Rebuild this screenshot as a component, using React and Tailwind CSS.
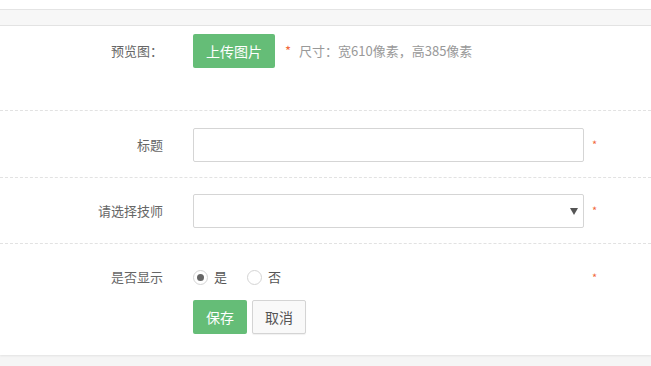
const font = { fontFamily: '"Noto Sans CJK SC", "Liberation Sans", sans-serif' };

function Req({ className = '' }) {
  return <span className={`text-[11px] text-[#f2683d] ${className}`}>*</span>;
}

function Radio({ checked, label }) {
  return (
    <label className="flex items-center gap-[6px] text-[13px] text-[#555]">
      <span className="flex h-[15px] w-[15px] items-center justify-center rounded-full border border-[#d4d4d4] bg-white">
        {checked && <span className="h-[7px] w-[7px] rounded-full bg-[#666]" />}
      </span>
      {label}
    </label>
  );
}

export default function App() {
  return (
    <div className="h-[366px] w-[651px] overflow-hidden bg-[#f5f5f5]" style={font}>
      <div className="h-[9px] bg-white" />
      {/* Panel heading */}
      <div className="h-[17px] border-y border-[#e4e4e4] bg-[#f7f7f7]" />

      {/* Form card */}
      <div className="h-[329px] bg-white shadow-[0_1px_2px_rgba(0,0,0,0.08)]">
        {/* Preview image */}
        <div className="flex h-[85px] items-start border-b border-dashed border-[#e2e2e2] pt-[8px]">
          <div className="w-[163px] pt-[7px] text-right text-[13px] text-[#666]">预览图：</div>
          <button className="ml-[30px] h-[34px] w-[82px] rounded-[2px] bg-[#65bd77] text-[14px] text-white">
            上传图片
          </button>
          <div className="ml-[10px] flex items-center pt-[7px] text-[13px] text-[#999]">
            <span className="mr-[8px] text-[#f2683d]">*</span>
            尺寸：宽610像素，高385像素
          </div>
        </div>

        {/* Title */}
        <div className="flex h-[67px] items-start border-b border-dashed border-[#e2e2e2] pt-[17px]">
          <div className="w-[163px] pt-[7px] text-right text-[13px] text-[#666]">标题</div>
          <input className="ml-[30px] h-[34px] w-[391px] rounded-[2px] border border-[#d5d5d5] bg-white px-2 outline-none" />
          <Req className="ml-[8px] pt-[8px]" />
        </div>

        {/* Technician */}
        <div className="flex h-[66px] items-start border-b border-dashed border-[#e2e2e2] pt-[16px]">
          <div className="w-[163px] pt-[7px] text-right text-[13px] text-[#666]">请选择技师</div>
          <div className="ml-[30px] flex h-[34px] w-[391px] items-center justify-end rounded-[2px] border border-[#d5d5d5] bg-white pr-[5px]">
            <svg width="8" height="7" viewBox="0 0 8 7">
              <path d="M0 0h8L4 7z" fill="#555" />
            </svg>
          </div>
          <Req className="ml-[8px] pt-[8px]" />
        </div>

        {/* Display */}
        <div className="pt-[24px]">
          <div className="flex h-[18px] items-center">
            <div className="w-[163px] text-right text-[13px] text-[#666]">是否显示</div>
            <div className="ml-[30px] flex w-[391px] items-center gap-[20px]">
              <Radio checked label="是" />
              <Radio label="否" />
            </div>
            <Req className="ml-[8px]" />
          </div>
          <div className="ml-[193px] mt-[14px] flex gap-[5px]">
            <button className="h-[34px] w-[54px] rounded-[2px] bg-[#65bd77] text-[14px] text-white">保存</button>
            <button className="h-[34px] w-[54px] rounded-[2px] border border-[#d4d4d4] bg-[#f9f9f9] text-[14px] text-[#555] shadow-[0_1px_1px_rgba(0,0,0,0.06)]">
              取消
            </button>
          </div>
        </div>
      </div>
    </div>
  );
}
